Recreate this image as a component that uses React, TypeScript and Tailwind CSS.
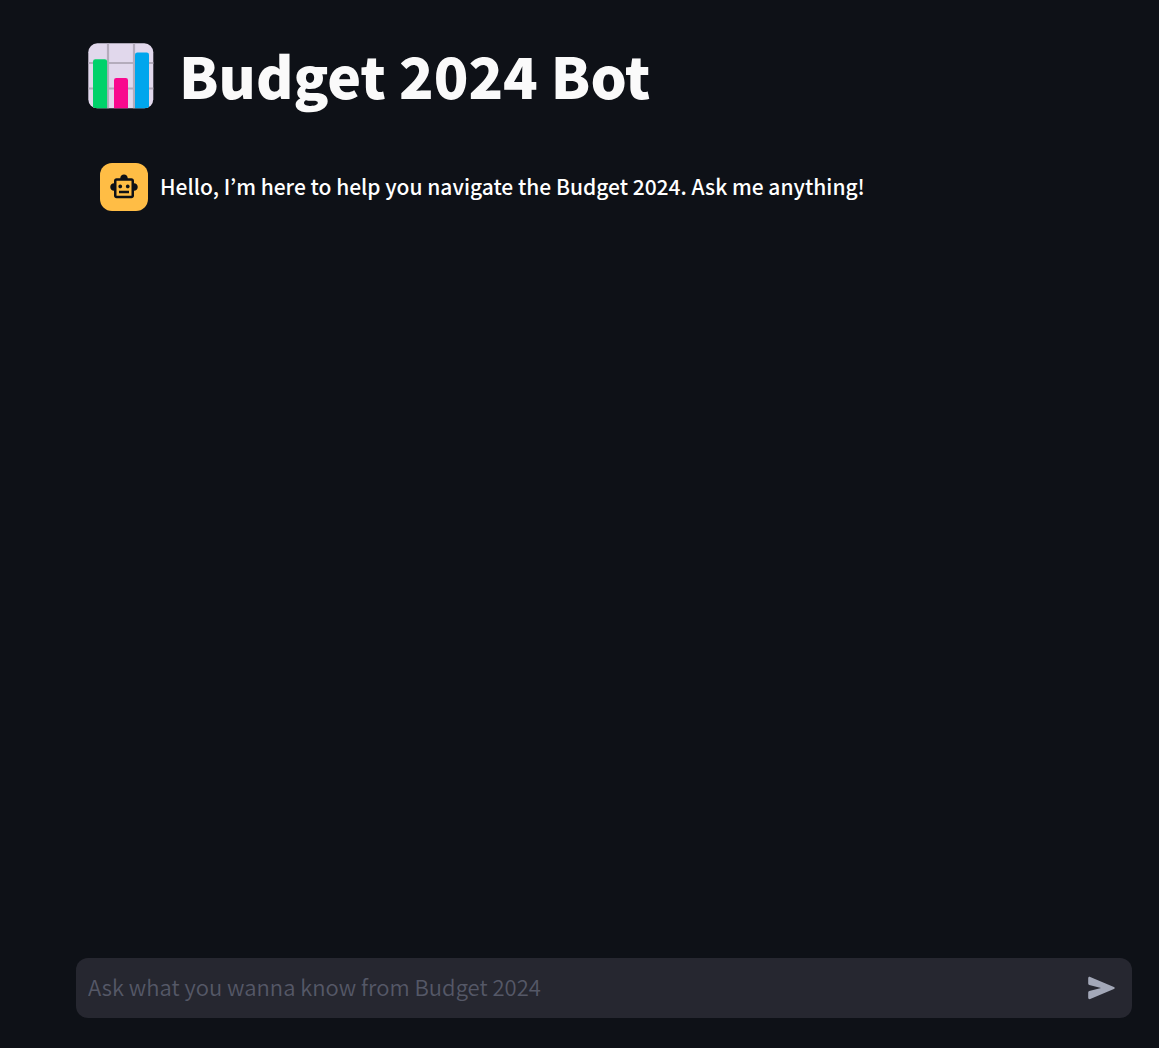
import { useState } from "react";

function ChartIcon() {
  return (
    <svg viewBox="0 0 66 66" className="size-[66px] shrink-0" role="img" aria-label="Bar chart">
      <defs>
        <clipPath id="chart-card">
          <rect x="0.3" y="0.3" width="65" height="65" rx="9" />
        </clipPath>
      </defs>
      <g clipPath="url(#chart-card)">
        <rect width="66" height="66" fill="#e1d8ec" />
        <path d="M20 0V66M46 0V66M0 20H66M0 45.5H66" stroke="#b4acbc" strokeWidth="2.2" />
        <path d="M5 66V18.500a2.300 2.300 0 0 1 2.300-2.300h9.500a2.300 2.300 0 0 1 2.300 2.300V66z" fill="#00d26a" />
        <path d="M26 66V37.300a2.300 2.300 0 0 1 2.300-2.300h9.400a2.300 2.300 0 0 1 2.300 2.300V66z" fill="#f8098e" />
        <path d="M47 66V11.800a2.300 2.300 0 0 1 2.300-2.300h9.400a2.300 2.300 0 0 1 2.300 2.300V66z" fill="#00a6ed" />
      </g>
    </svg>
  );
}

function RobotIcon() {
  return (
    <svg viewBox="0 0 24 24" className="size-[30px]" fill="#0e1117" aria-hidden="true">
      <path d="M20 9V7c0-1.100-.9-2-2-2h-3c0-1.660-1.340-3-3-3S9 3.340 9 5H6c-1.100 0-2 .9-2 2v2c-1.660 0-3 1.340-3 3s1.340 3 3 3v4c0 1.100.9 2 2 2h12c1.100 0 2-.9 2-2v-4c1.660 0 3-1.340 3-3s-1.340-3-3-3zm-2 10H6V7h12v12zm-9-6c-.83 0-1.500-.67-1.500-1.500S8.170 10 9 10s1.500.67 1.500 1.500S9.830 13 9 13zm7.500-1.500c0 .83-.67 1.500-1.500 1.500s-1.500-.67-1.500-1.500.67-1.500 1.500-1.500 1.500.67 1.500 1.500zM8 15h8v2H8v-2z" />
    </svg>
  );
}

function SendIcon() {
  return (
    <svg viewBox="0 0 28 24" className="h-6 w-7" fill="#a3a8b8" aria-hidden="true">
      <path d="M0.200 2.200C0.200 1.100 1.100.5 2.200.9L25.900 11.100C27.100 11.600 27.100 12.400 25.900 12.900L2.200 23.100C1.100 23.500.2 22.900.2 21.800V16.400C.2 15.700.6 15.200 1.300 15L13 12L1.300 9C.6 8.800.2 8.300.2 7.600Z" />
    </svg>
  );
}

export default function App() {
  const [question, setQuestion] = useState("");

  return (
    <div className="flex min-h-screen flex-col bg-[#0e1117] pt-7 pr-[27px] pb-[30px] pl-[76px] font-['Noto_Sans_CJK_KR',sans-serif] font-[350] text-[#fafafa]">
      <header className="flex items-center gap-[25px] px-3">
        <ChartIcon />
        <h1 className="pb-1 text-[57px] leading-[92px] font-black">Budget 2024 Bot</h1>
      </header>
      <main className="flex-1 px-6 pt-[39px]">
        <article className="flex items-center gap-3">
          <div className="flex size-12 shrink-0 items-center justify-center rounded-xl bg-[#ffbd45]">
            <RobotIcon />
          </div>
          <p className="pb-[3px] text-[21px] leading-9 font-medium text-white">
            Hello, I’m here to help you navigate the Budget 2024. Ask me anything!
          </p>
        </article>
      </main>
      <form
        className="flex h-[60px] items-center rounded-xl bg-[#262730] pr-4 pl-3"
        onSubmit={(event) => {
          event.preventDefault();
          setQuestion("");
        }}
      >
        <input
          type="text"
          aria-label="Ask what you wanna know from Budget 2024"
          placeholder="Ask what you wanna know from Budget 2024"
          value={question}
          onChange={(event) => setQuestion(event.target.value)}
          className="min-w-0 flex-1 bg-transparent pb-1 text-[22px] leading-9 outline-none placeholder:text-[#555867]"
        />
        <button type="submit" aria-label="Send message">
          <SendIcon />
        </button>
      </form>
    </div>
  );
}
